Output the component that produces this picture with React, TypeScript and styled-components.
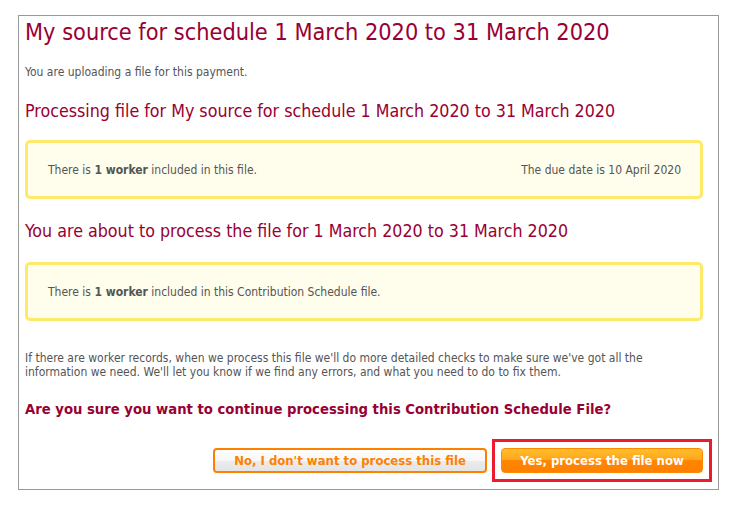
import React from 'react';
import styled, { createGlobalStyle } from 'styled-components';

const GlobalStyle = createGlobalStyle`
	body {
		margin: 0;
		background: #ffffff;
		font-family: Tahoma, "DejaVu Sans Condensed", "Liberation Sans", sans-serif;
	}
`;

const Page = styled.div`
	padding: 15px 0 0 18px;
`;

const Panel = styled.div`
	width: 701px;
	box-sizing: border-box;
	border: 1px solid #999999;
	padding: 1px 6px 7px 6px;
	display: flex;
	flex-direction: column;
`;

const Title = styled.h1`
	margin: 0;
	font-size: 23.3px;
	line-height: 30px;
	font-weight: normal;
	color: #990033;
`;

const Heading = styled.h2<{ $top: number }>`
	margin: ${(p) => p.$top}px 0 0 0;
	font-size: 17.7px;
	line-height: 24px;
	font-weight: normal;
	color: #990033;
`;

const Question = styled.h3`
	margin: 20px 0 0 0;
	font-size: 14.7px;
	line-height: 20px;
	font-weight: bold;
	color: #990033;
`;

const Text = styled.p<{ $top: number }>`
	margin: ${(p) => p.$top}px 9px 0 0;
	font-size: 12px;
	line-height: 14px;
	color: #555555;
`;

const InfoBox = styled.div<{ $top: number }>`
	margin: ${(p) => p.$top}px 9px 0 0;
	height: 59px;
	box-sizing: border-box;
	border: 3px solid #ffe96b;
	border-radius: 5px;
	background: #fffdeb;
	padding: 0 19px 0 20px;
	display: flex;
	align-items: center;
	justify-content: space-between;
	font-size: 12px;
	color: #555555;

	b {
		font-weight: bold;
	}
`;

const Actions = styled.div`
	margin-top: 20px;
	display: flex;
	justify-content: flex-end;
	align-items: center;
	gap: 5px;
`;

const Highlight = styled.div`
	border: 3px solid #ec1c2e;
	padding: 6px;
	display: flex;
`;

const Button = styled.button<{ $primary?: boolean }>`
	height: 25px;
	box-sizing: border-box;
	border-radius: 4px;
	font-family: inherit;
	font-size: 13px;
	font-weight: bold;
	cursor: pointer;
	padding: 0;
	border: ${(p) => (p.$primary ? '1px solid #ff8a00' : '2px solid #ff8000')};
	color: ${(p) => (p.$primary ? '#ffffff' : '#ff8000')};
	width: ${(p) => (p.$primary ? '202px' : '274px')};
	background: ${(p) =>
		p.$primary
			? 'linear-gradient(180deg, #ffc02a 0%, #ffa21c 50%, #ff8600 50%, #ff8000 100%)'
			: 'linear-gradient(180deg, #ffffff 0%, #f7f7f7 50%, #ececec 50%, #e4e4e4 100%)'};
`;

export default function App() {
	return (
		<>
			<GlobalStyle />
			<Page>
				<Panel>
					<Title>My source for schedule 1 March 2020 to 31 March 2020</Title>
					<Text $top={18}>You are uploading a file for this payment.</Text>
					<Heading $top={20}>
						Processing file for My source for schedule 1 March 2020 to 31 March 2020
					</Heading>
					<InfoBox $top={17}>
						<span>
							There is <b>1 worker</b> included in this file.
						</span>
						<span>The due date is 10 April 2020</span>
					</InfoBox>
					<Heading $top={20}>
						You are about to process the file for 1 March 2020 to 31 March 2020
					</Heading>
					<InfoBox $top={19}>
						<span>
							There is <b>1 worker</b> included in this Contribution Schedule file.
						</span>
					</InfoBox>
					<Text $top={30}>
						If there are worker records, when we process this file we'll do more detailed checks
						to make sure we've got all the information we need. We'll let you know if we find any
						errors, and what you need to do to fix them.
					</Text>
					<Question>
						Are you sure you want to continue processing this Contribution Schedule File?
					</Question>
					<Actions>
						<Button>No, I don't want to process this file</Button>
						<Highlight>
							<Button $primary>Yes, process the file now</Button>
						</Highlight>
					</Actions>
				</Panel>
			</Page>
		</>
	);
}
